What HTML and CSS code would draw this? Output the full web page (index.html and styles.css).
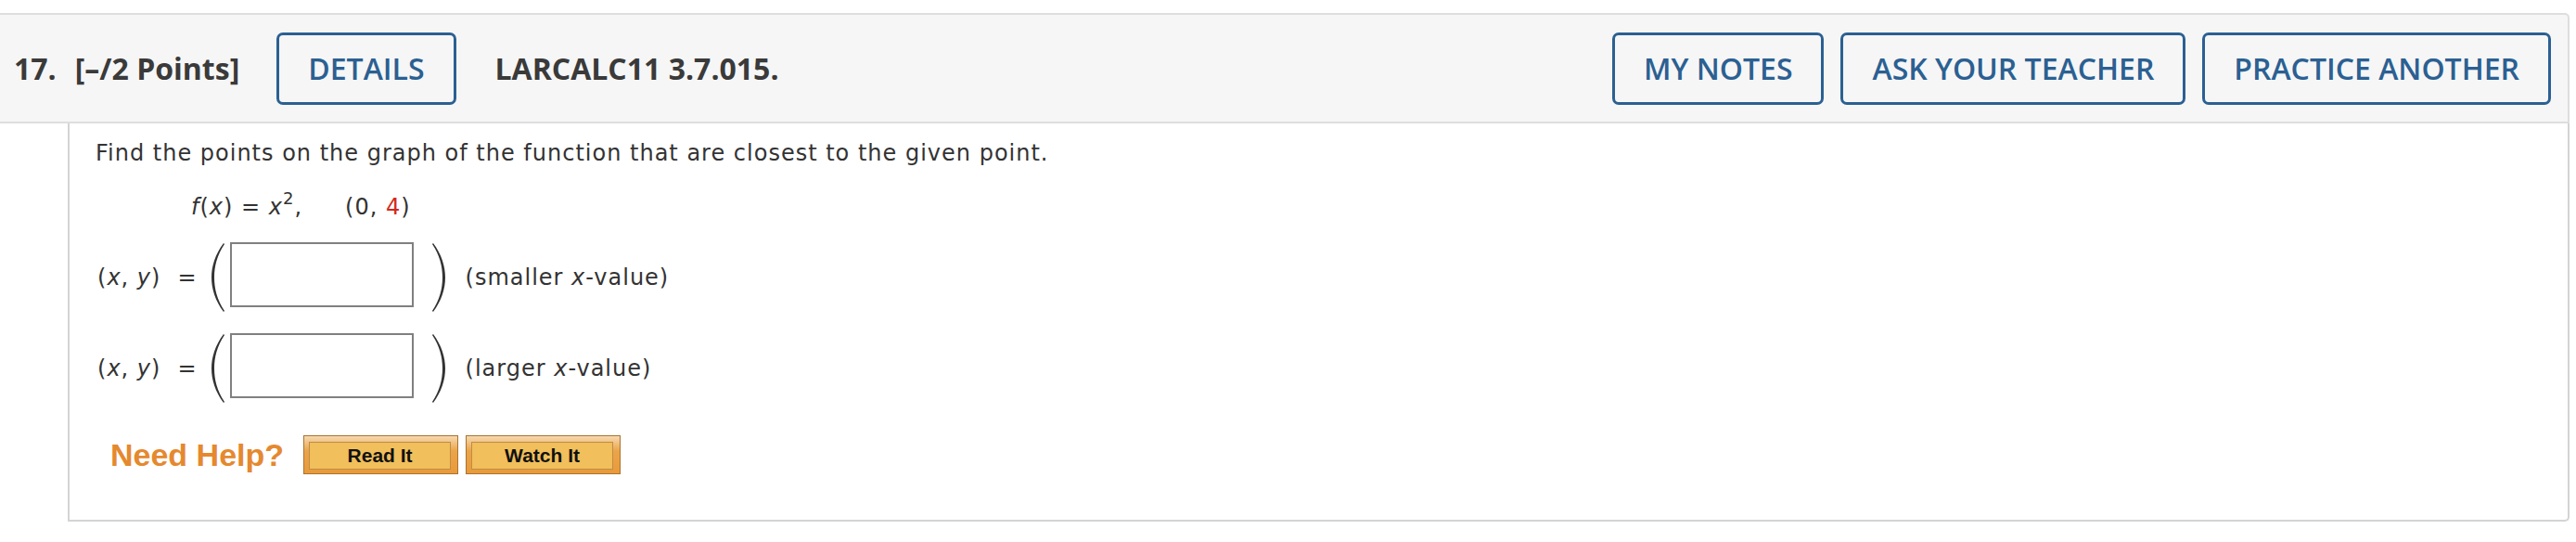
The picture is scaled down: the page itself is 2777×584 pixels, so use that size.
FILE: index.html
```html
<!DOCTYPE html>
<html lang="en">
<head>
<meta charset="utf-8">
<title>Question 17</title>
<link rel="stylesheet" href="styles.css">
</head>
<body>
<div class="question">
  <div class="qhead">
    <span class="qnum">17.</span>
    <span class="qpts">[–/2 Points]</span>
    <button class="hbtn details">DETAILS</button>
    <span class="qcode">LARCALC11 3.7.015.</span>
    <span class="spacer"></span>
    <div class="hactions">
      <button class="hbtn">MY NOTES</button>
      <button class="hbtn">ASK YOUR TEACHER</button>
      <button class="hbtn">PRACTICE ANOTHER</button>
    </div>
  </div>
  <div class="qbody">
    <p class="prompt">Find the points on the graph of the function that are closest to the given point.</p>
    <div class="formula"><i>f</i>(<i>x</i>) = <i>x</i><sup>2</sup>,<span class="pt">(0, <span class="red">4</span>)</span></div>
    <div class="ans-row">
      <span class="lhs">(<i>x</i>, <i>y</i>)</span>
      <span class="eq">=</span>
      <svg class="paren" viewBox="0 0 18 76" width="18" height="76"><path d="M16,1 C7,13 3,26 3,38 C3,50 7,63 16,75 L17,74 C9,62 6,50 6,38 C6,26 9,14 17,2 Z"/></svg>
      <span class="inbox"></span>
      <svg class="paren rp" viewBox="0 0 18 76" width="18" height="76"><path d="M2,1 C11,13 15,26 15,38 C15,50 11,63 2,75 L1,74 C9,62 12,50 12,38 C12,26 9,14 1,2 Z"/></svg>
      <span class="note">(smaller <i>x</i>-value)</span>
    </div>
    <div class="ans-row">
      <span class="lhs">(<i>x</i>, <i>y</i>)</span>
      <span class="eq">=</span>
      <svg class="paren" viewBox="0 0 18 76" width="18" height="76"><path d="M16,1 C7,13 3,26 3,38 C3,50 7,63 16,75 L17,74 C9,62 6,50 6,38 C6,26 9,14 17,2 Z"/></svg>
      <span class="inbox"></span>
      <svg class="paren rp" viewBox="0 0 18 76" width="18" height="76"><path d="M2,1 C11,13 15,26 15,38 C15,50 11,63 2,75 L1,74 C9,62 12,50 12,38 C12,26 9,14 1,2 Z"/></svg>
      <span class="note">(larger <i>x</i>-value)</span>
    </div>
    <div class="help">
      <span class="need">Need Help?</span>
      <button class="hlp"><span>Read It</span></button>
      <button class="hlp"><span>Watch It</span></button>
    </div>
  </div>
</div>
</body>
</html>
```

FILE: styles.css
```css
html, body {
  margin: 0;
  padding: 0;
  background: #ffffff;
}

.question {
  padding-top: 14px;
  margin-right: 7px;
}

.qhead {
  display: flex;
  align-items: center;
  height: 115px;
  background: #f6f6f6;
  border-top: 2px solid #dedede;
  border-bottom: 2px solid #dedede;
  border-right: 2px solid #dedede;
  border-top-right-radius: 5px;
  padding: 0 18px 0 15px;
  font-family: "Open Sans", "Liberation Sans", sans-serif;
  color: #3a3a3a;
}

.qnum,
.qpts,
.qcode {
  font-weight: 700;
  font-size: 32px;
}

.qpts {
  margin-left: 20px;
}

.qcode {
  margin-left: 42px;
}

.spacer {
  flex: 1;
}

.hactions {
  display: flex;
  gap: 18px;
}

.hbtn {
  height: 78px;
  box-sizing: border-box;
  border: 3px solid #2b6092;
  border-radius: 7px;
  background: #f6f6f6;
  color: #2b6092;
  font-family: "Open Sans", "Liberation Sans", sans-serif;
  font-weight: 600;
  font-size: 32px;
  padding: 0 31px;
  margin: 0;
}

.details {
  margin-left: 40px;
}

.qbody {
  margin-left: 73px;
  border-left: 2px solid #d4d4d4;
  border-right: 2px solid #d4d4d4;
  border-bottom: 2px solid #d4d4d4;
  border-bottom-right-radius: 5px;
  padding: 14px 0 49px 28px;
  font-family: "DejaVu Sans", Verdana, sans-serif;
  font-size: 24px;
  letter-spacing: 1px;
  color: #333333;
}

.prompt {
  margin: 0;
  line-height: 36px;
}

.formula {
  margin: 22px 0 0 103px;
  line-height: 36px;
}

.formula sup {
  font-size: 18px;
  line-height: 0;
  vertical-align: 11px;
}

.pt {
  margin-left: 46px;
}

.red {
  color: #d2281c;
}

.ans-row {
  display: flex;
  align-items: center;
  height: 80px;
  margin-top: 18px;
}

.ans-row + .ans-row {
  margin-top: 18px;
}

.lhs {
  margin-left: 2px;
}

.eq {
  margin-left: 18px;
}

.paren {
  fill: #333333;
  margin-left: 12px;
}

.inbox {
  width: 198px;
  height: 70px;
  box-sizing: border-box;
  border: 2px solid #808080;
  background: #ffffff;
  margin-left: 5px;
  margin-top: -6px;
}

.paren.rp {
  margin-left: 19px;
}

.note {
  margin-left: 19px;
}

.help {
  display: flex;
  align-items: center;
  margin-top: 32px;
  margin-left: 16px;
  letter-spacing: 0;
}

.need {
  font-family: "Liberation Sans", Arial, sans-serif;
  font-weight: 700;
  font-size: 34px;
  color: #e5892f;
  margin-right: 21px;
}

.hlp {
  width: 167px;
  height: 42px;
  box-sizing: border-box;
  padding: 6px 7px 4px 5px;
  border: 1px solid #a8742f;
  background: linear-gradient(#f6d9b0 0, #eba449 40%, #e99a3b 100%);
  margin: 0 8px 0 0;
  display: flex;
}

.hlp span {
  flex: 1;
  display: flex;
  align-items: center;
  justify-content: center;
  background: #f1bf5b;
  border: 1px solid #c08c47;
  font-family: "Liberation Sans", Arial, sans-serif;
  font-weight: 700;
  font-size: 21px;
  color: #111111;
}
```
